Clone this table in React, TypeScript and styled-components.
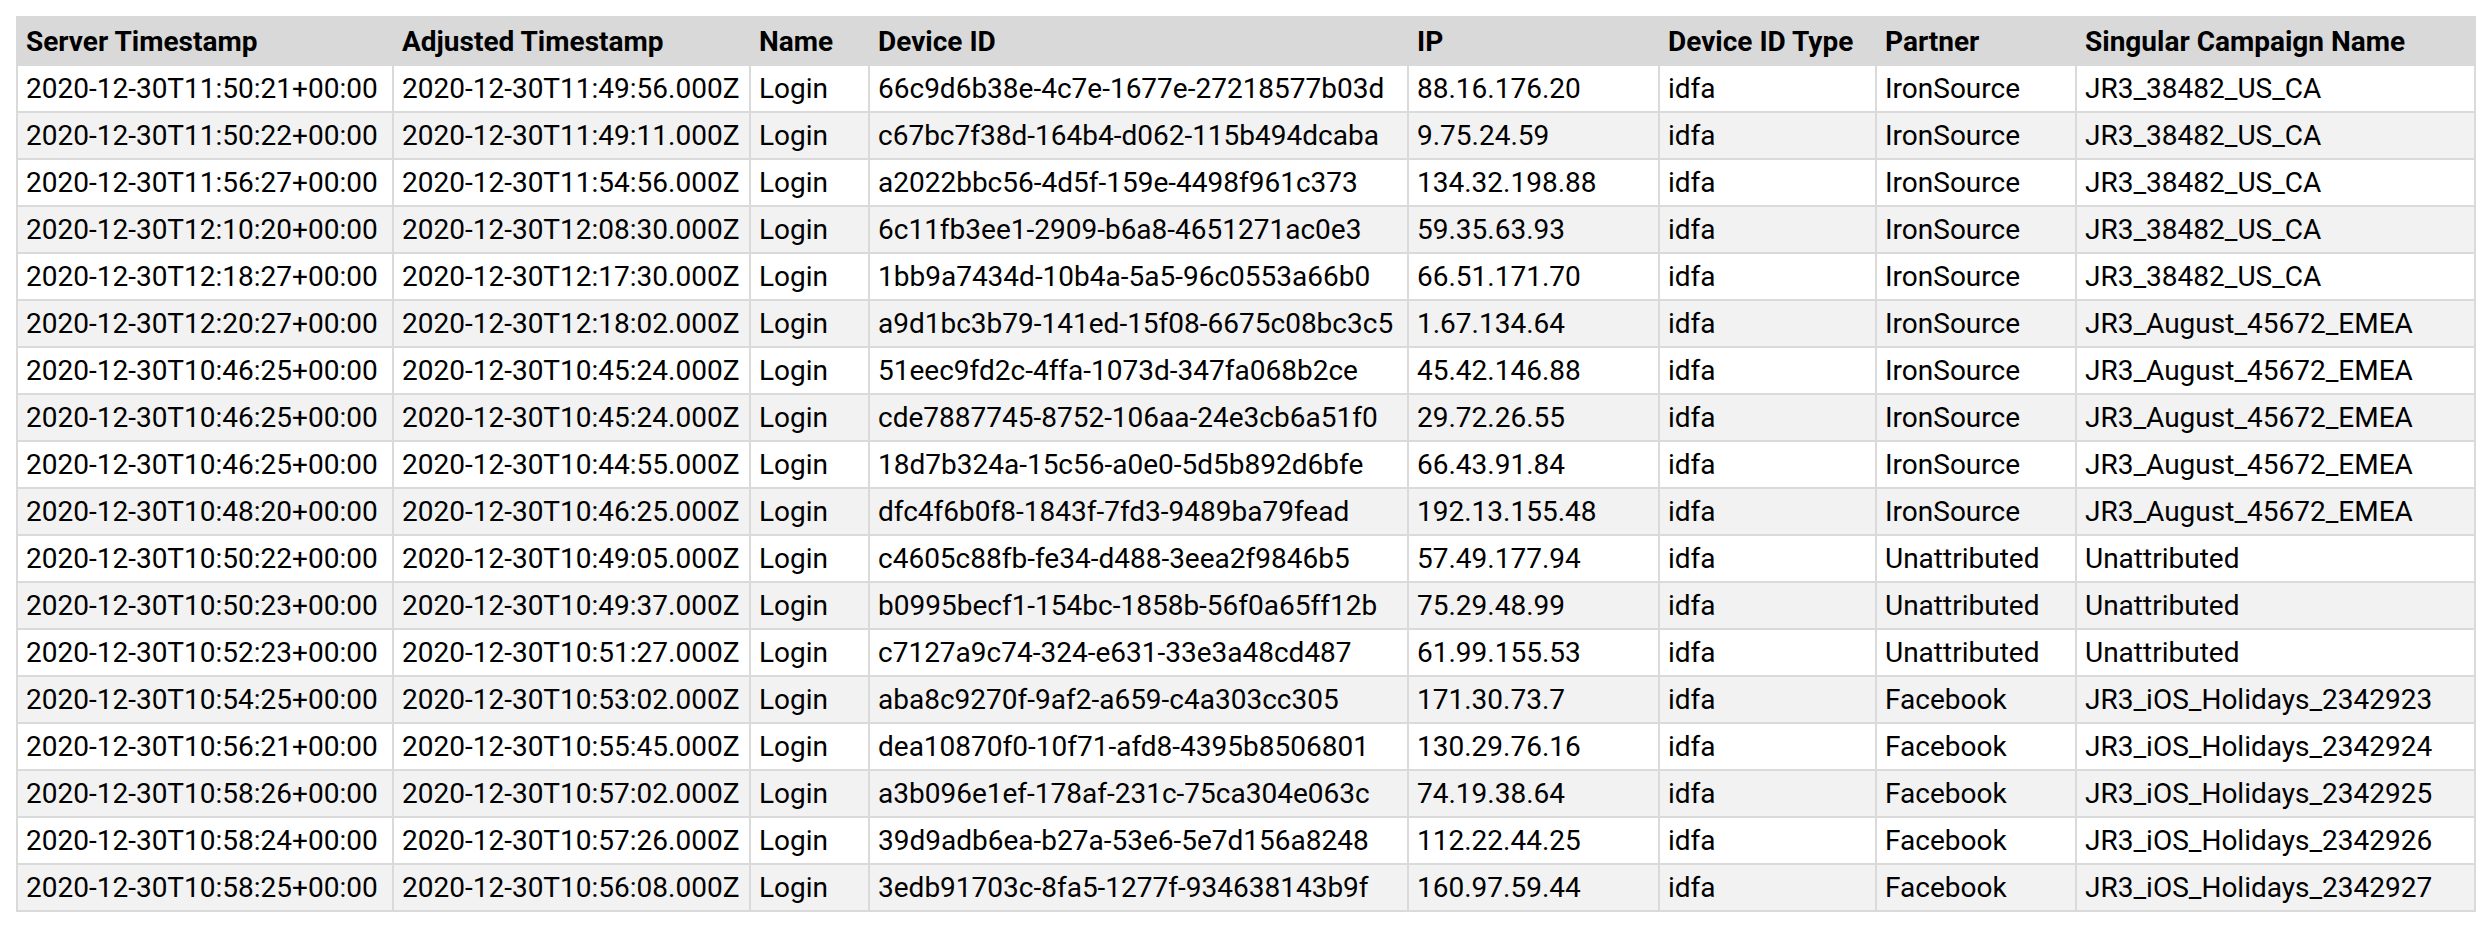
import React from "react";
import styled, { createGlobalStyle } from "styled-components";

const GlobalStyle = createGlobalStyle`
  body {
    margin: 0;
    background: #ffffff;
    font-family: Roboto, "Noto Sans", sans-serif;
    color: #000000;
  }
`;

const Page = styled.div`
  padding: 16px 12px 16px 16px;
`;

const Table = styled.table`
  border-collapse: collapse;
  table-layout: fixed;
  width: 2458px;
  font-size: 28px;
  border: 2px solid #dadada;
`;

const HeadCell = styled.th<{ $w: number }>`
  box-sizing: border-box;
  width: ${p => p.$w}px;
  height: 48px;
  padding: 0 8px;
  text-align: left;
  font-weight: 700;
  background: #d9d9d9;
  border: 2px solid #d9d9d9;
  white-space: nowrap;
  overflow: hidden;
`;

const Row = styled.tr<{ $striped: boolean }>`
  background: ${p => (p.$striped ? "#f2f2f2" : "#ffffff")};
`;

const Cell = styled.td`
  box-sizing: border-box;
  height: 47px;
  padding: 0 8px;
  border: 2px solid #dadada;
  white-space: nowrap;
  overflow: hidden;
`;

const columns: [string, number][] = [
  ["Server Timestamp", 376],
  ["Adjusted Timestamp", 357],
  ["Name", 119],
  ["Device ID", 539],
  ["IP", 251],
  ["Device ID Type", 217],
  ["Partner", 200],
  ["Singular Campaign Name", 399],
];

const rows: string[][] = [
  ["2020-12-30T11:50:21+00:00", "2020-12-30T11:49:56.000Z", "66c9d6b38e-4c7e-1677e-27218577b03d", "88.16.176.20", "IronSource", "JR3_38482_US_CA"],
  ["2020-12-30T11:50:22+00:00", "2020-12-30T11:49:11.000Z", "c67bc7f38d-164b4-d062-115b494dcaba", "9.75.24.59", "IronSource", "JR3_38482_US_CA"],
  ["2020-12-30T11:56:27+00:00", "2020-12-30T11:54:56.000Z", "a2022bbc56-4d5f-159e-4498f961c373", "134.32.198.88", "IronSource", "JR3_38482_US_CA"],
  ["2020-12-30T12:10:20+00:00", "2020-12-30T12:08:30.000Z", "6c11fb3ee1-2909-b6a8-4651271ac0e3", "59.35.63.93", "IronSource", "JR3_38482_US_CA"],
  ["2020-12-30T12:18:27+00:00", "2020-12-30T12:17:30.000Z", "1bb9a7434d-10b4a-5a5-96c0553a66b0", "66.51.171.70", "IronSource", "JR3_38482_US_CA"],
  ["2020-12-30T12:20:27+00:00", "2020-12-30T12:18:02.000Z", "a9d1bc3b79-141ed-15f08-6675c08bc3c5", "1.67.134.64", "IronSource", "JR3_August_45672_EMEA"],
  ["2020-12-30T10:46:25+00:00", "2020-12-30T10:45:24.000Z", "51eec9fd2c-4ffa-1073d-347fa068b2ce", "45.42.146.88", "IronSource", "JR3_August_45672_EMEA"],
  ["2020-12-30T10:46:25+00:00", "2020-12-30T10:45:24.000Z", "cde7887745-8752-106aa-24e3cb6a51f0", "29.72.26.55", "IronSource", "JR3_August_45672_EMEA"],
  ["2020-12-30T10:46:25+00:00", "2020-12-30T10:44:55.000Z", "18d7b324a-15c56-a0e0-5d5b892d6bfe", "66.43.91.84", "IronSource", "JR3_August_45672_EMEA"],
  ["2020-12-30T10:48:20+00:00", "2020-12-30T10:46:25.000Z", "dfc4f6b0f8-1843f-7fd3-9489ba79fead", "192.13.155.48", "IronSource", "JR3_August_45672_EMEA"],
  ["2020-12-30T10:50:22+00:00", "2020-12-30T10:49:05.000Z", "c4605c88fb-fe34-d488-3eea2f9846b5", "57.49.177.94", "Unattributed", "Unattributed"],
  ["2020-12-30T10:50:23+00:00", "2020-12-30T10:49:37.000Z", "b0995becf1-154bc-1858b-56f0a65ff12b", "75.29.48.99", "Unattributed", "Unattributed"],
  ["2020-12-30T10:52:23+00:00", "2020-12-30T10:51:27.000Z", "c7127a9c74-324-e631-33e3a48cd487", "61.99.155.53", "Unattributed", "Unattributed"],
  ["2020-12-30T10:54:25+00:00", "2020-12-30T10:53:02.000Z", "aba8c9270f-9af2-a659-c4a303cc305", "171.30.73.7", "Facebook", "JR3_iOS_Holidays_2342923"],
  ["2020-12-30T10:56:21+00:00", "2020-12-30T10:55:45.000Z", "dea10870f0-10f71-afd8-4395b8506801", "130.29.76.16", "Facebook", "JR3_iOS_Holidays_2342924"],
  ["2020-12-30T10:58:26+00:00", "2020-12-30T10:57:02.000Z", "a3b096e1ef-178af-231c-75ca304e063c", "74.19.38.64", "Facebook", "JR3_iOS_Holidays_2342925"],
  ["2020-12-30T10:58:24+00:00", "2020-12-30T10:57:26.000Z", "39d9adb6ea-b27a-53e6-5e7d156a8248", "112.22.44.25", "Facebook", "JR3_iOS_Holidays_2342926"],
  ["2020-12-30T10:58:25+00:00", "2020-12-30T10:56:08.000Z", "3edb91703c-8fa5-1277f-934638143b9f", "160.97.59.44", "Facebook", "JR3_iOS_Holidays_2342927"],
];

const App: React.FC = () => {
  return (
    <Page>
      <GlobalStyle />
      <Table>
        <thead>
          <tr>
            {columns.map(([label, w]) => (
              <HeadCell key={label} $w={w}>{label}</HeadCell>
            ))}
          </tr>
        </thead>
        <tbody>
          {rows.map((r, i) => (
            <Row key={i} $striped={i % 2 === 1}>
              <Cell>{r[0]}</Cell>
              <Cell>{r[1]}</Cell>
              <Cell>Login</Cell>
              <Cell>{r[2]}</Cell>
              <Cell>{r[3]}</Cell>
              <Cell>idfa</Cell>
              <Cell>{r[4]}</Cell>
              <Cell>{r[5]}</Cell>
            </Row>
          ))}
        </tbody>
      </Table>
    </Page>
  );
};

export default App;
